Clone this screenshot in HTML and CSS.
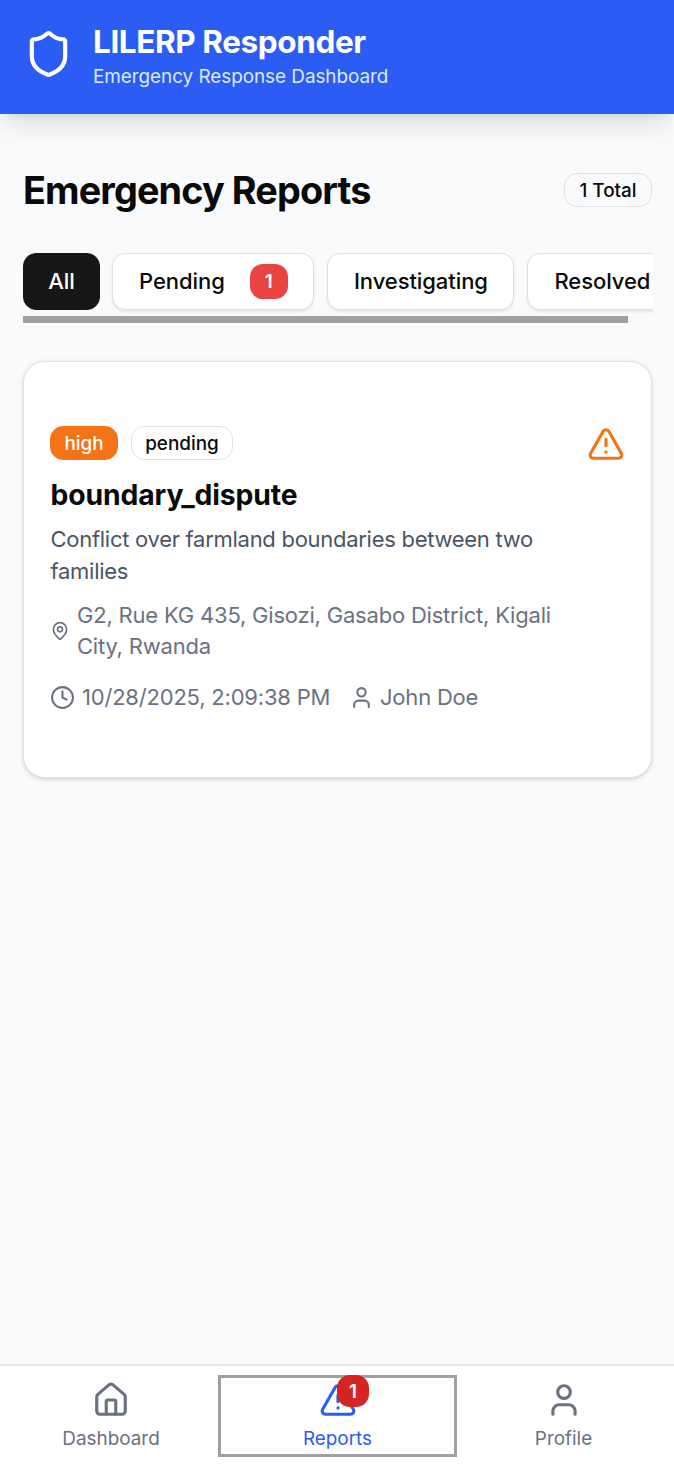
FILE: index.html
```html
<!DOCTYPE html>
<html lang="en">
<head>
<meta charset="utf-8">
<title>LILERP Responder</title>
<link rel="stylesheet" href="styles.css">
</head>
<body>
<div class="app">
  <header class="header">
    <svg class="icon shield" viewBox="0 0 24 24"><path d="M20 13c0 5-3.5 7.5-7.66 8.95a1 1 0 0 1-.67-.01C7.5 20.5 4 18 4 13V6a1 1 0 0 1 1-1c2 0 4.500-1.200 6.240-2.720a1.170 1.170 0 0 1 1.520 0C14.510 3.810 17 5 19 5a1 1 0 0 1 1 1z"/></svg>
    <div class="brand">
      <h1 class="brand-title">LILERP Responder</h1>
      <p class="brand-subtitle">Emergency Response Dashboard</p>
    </div>
  </header>

  <main class="main">
    <div class="heading-row">
      <h2 class="heading">Emergency Reports</h2>
      <span class="badge total">1 Total</span>
    </div>
    <div class="filters">
      <div class="tabs">
        <button class="tab tab-all">All</button>
        <button class="tab tab-pending"><span class="pending-label">Pending</span><span class="count">1</span></button>
        <button class="tab tab-investigating">Investigating</button>
        <button class="tab tab-resolved">Resolved</button>
      </div>
      <div class="scroll-thumb"></div>
    </div>

    <article class="card">
      <div class="card-body">
        <div class="badges">
          <span class="badge high">high</span>
          <span class="badge pending">pending</span>
        </div>
        <h3 class="card-title">boundary_dispute</h3>
        <p class="description">Conflict over farmland boundaries between two<br>families</p>
        <div class="location">
          <svg class="icon pin" viewBox="0 0 24 24"><path d="M20 10c0 4.993-5.539 10.193-7.399 11.799a1 1 0 0 1-1.202 0C9.539 20.193 4 14.993 4 10a8 8 0 0 1 16 0"/><circle cx="12" cy="10" r="3"/></svg>
          <p class="address">G2, Rue KG 435, Gisozi, Gasabo District, Kigali<br>City, Rwanda</p>
        </div>
        <div class="meta">
          <svg class="icon clock" viewBox="0 0 24 24"><circle cx="12" cy="12" r="10"/><path d="M12 6v6l4 2"/></svg>
          <span class="time">10/28/2025, 2:09:38 PM</span>
          <svg class="icon person" viewBox="0 0 24 24"><path d="M19 21v-2a4 4 0 0 0-4-4H9a4 4 0 0 0-4 4v2"/><circle cx="12" cy="7" r="4"/></svg>
          <span class="name">John Doe</span>
        </div>
      </div>
      <svg class="icon warning" viewBox="0 0 24 24"><path d="m21.730 18-8-14a2 2 0 0 0-3.480 0l-8 14A2 2 0 0 0 4 21h16a2 2 0 0 0 1.730-3M12 9v4M12 17h.01"/></svg>
    </article>
  </main>

  <nav class="nav">
    <a class="nav-item">
      <svg class="icon nav-icon" viewBox="0 0 24 24"><path d="M15 21v-8a1 1 0 0 0-1-1h-4a1 1 0 0 0-1 1v8"/><path d="M3 10a2 2 0 0 1 .709-1.528l7-5.999a2 2 0 0 1 2.582 0l7 5.999A2 2 0 0 1 21 10v9a2 2 0 0 1-2 2H5a2 2 0 0 1-2-2z"/></svg>
      <span class="nav-label label-dashboard">Dashboard</span>
    </a>
    <a class="nav-item active">
      <svg class="icon nav-icon" viewBox="0 0 24 24"><path d="m21.730 18-8-14a2 2 0 0 0-3.480 0l-8 14A2 2 0 0 0 4 21h16a2 2 0 0 0 1.730-3M12 9v4M12 17h.01"/></svg>
      <span class="nav-label label-reports">Reports</span>
      <span class="nav-count">1</span>
    </a>
    <a class="nav-item">
      <svg class="icon nav-icon" viewBox="0 0 24 24"><path d="M19 21v-2a4 4 0 0 0-4-4H9a4 4 0 0 0-4 4v2"/><circle cx="12" cy="7" r="4"/></svg>
      <span class="nav-label label-profile">Profile</span>
    </a>
  </nav>
</div>
</body>
</html>
```
FILE: styles.css
```css
*, *::before { box-sizing: border-box; }
body, h1, h2, h3, p { margin: 0; }
body { font-family: Inter, sans-serif; color: #0a0a0a; background: #f9fafb; }
.app { height: 1464px; display: flex; flex-direction: column; overflow: hidden; white-space: nowrap; }
.icon { display: block; flex: none; fill: none; stroke: currentColor; stroke-width: 2; stroke-linecap: round; stroke-linejoin: round; }

.header { height: 114px; flex: none; display: flex; padding: 24px 24px 0 23px; background: #2b5cf3; color: #fff; box-shadow: 0 16px 24px -5px rgba(0,0,0,.1), 0 6px 9px -6px rgba(0,0,0,.1); }
.shield { width: 51px; height: 50px; margin-top: 5px; }
.brand { margin-left: 19px; }
.brand-title { font-size: 31.5px; line-height: 36px; font-weight: 700; letter-spacing: -.4px; }
.brand-subtitle { font-size: 18.900px; line-height: 26px; margin-top: 4px; letter-spacing: -.04px; color: #dbeafe; }

.main { flex: 1; padding: 56px 22px 0 23px; }
.heading-row { display: flex; justify-content: space-between; align-items: center; height: 44px; margin-bottom: 39px; padding-bottom: 5px; }
.heading { font-size: 37.800px; line-height: 44px; font-weight: 700; letter-spacing: -.88px; }
.badge { display: flex; align-items: center; justify-content: center; height: 34px; border: 1px solid #e2e2e2; border-radius: 13px; font-size: 18.900px; font-weight: 550; }
.total { width: 88px; margin-top: 1px; }

.filters { height: 70px; margin-right: -1px; overflow: hidden; }
.tabs { display: flex; gap: 13px; height: 63px; }
.tab { flex: none; height: 57px; padding: 0 0 1px; border: 1px solid #e0e0e0; border-radius: 13px; background: #fff; color: #0a0a0a; font: 500 22px Inter, sans-serif; letter-spacing: -.08px; display: flex; align-items: center; justify-content: center; box-shadow: 0 1.500px 3px rgba(0,0,0,.08); }
.tab-all { width: 77px; background: #171717; border-color: #171717; color: #fff; box-shadow: none; }
.tab-pending { width: 202px; margin-left: -.6px; gap: 25px; }
.tab-investigating { width: 187px; }
.tab-resolved { width: 150px; }
.count { width: 38px; height: 35px; margin-top: 1px; border-radius: 13px; background: #e94442; color: #fff; font-size: 18.900px; font-weight: 600; display: flex; align-items: center; justify-content: center; }
.scroll-thumb { width: 605px; height: 7px; background: #9f9f9f; }

.card { display: flex; justify-content: space-between; height: 417px; margin-top: 38px; padding: 63px 26px 0 26px; background: #fff; border: 1px solid #e2e2e2; border-radius: 22px; box-shadow: 0 1.500px 4px rgba(0,0,0,.14); }
.badges { display: flex; gap: 13px; padding-top: 1px; }
.high { width: 68px; background: #f37316; border-color: #f37316; color: #fff; }
.pending { width: 102px; }
.card-title { margin: 15px 0 0 .5px; font-size: 28.300px; line-height: 40px; font-weight: 700; letter-spacing: -.1px; }
.description { margin: 8px 0 0 .5px; font-size: 22px; line-height: 32px; letter-spacing: -.28px; color: #4a5565; }
.location { display: flex; align-items: center; margin-top: 13px; color: #6a7282; }
.pin { width: 20px; height: 20px; margin-right: 7px; }
.address { font-size: 22px; line-height: 31px; letter-spacing: -.2px; }
.meta { display: flex; align-items: center; height: 32px; margin-top: 19px; color: #6a7282; font-size: 22px; letter-spacing: -.2px; }
.clock { width: 25px; height: 25px; margin-right: 7px; }
.time { width: 269px; }
.person { width: 25px; height: 25px; margin: 0 6px 0 -2px; }
.warning { width: 38px; height: 38px; color: #f37316; margin: 0; }

.nav { flex: none; height: 100px; display: grid; grid-template-columns: 222px 231px 221px; border-top: 2px solid #e5e7eb; background: #fff; padding-top: 15px; color: #6a7282; }
.nav-item { position: relative; display: flex; flex-direction: column; align-items: center; }
.nav-icon { width: 38px; height: 38px; }
.nav-label { font-size: 18.900px; line-height: 25px; margin-top: 7px; }
.active { color: #2b5cf3; }
.active::before { content: ""; position: absolute; left: -4px; top: -6px; width: 239px; height: 82px; border: 3px solid #a0a0a0; }
.nav-count { position: absolute; left: 115px; top: -6px; width: 32px; height: 32px; border-radius: 13px; background: #d42423; color: #fff; font-size: 18.900px; font-weight: 600; display: flex; align-items: center; justify-content: center; }
```
